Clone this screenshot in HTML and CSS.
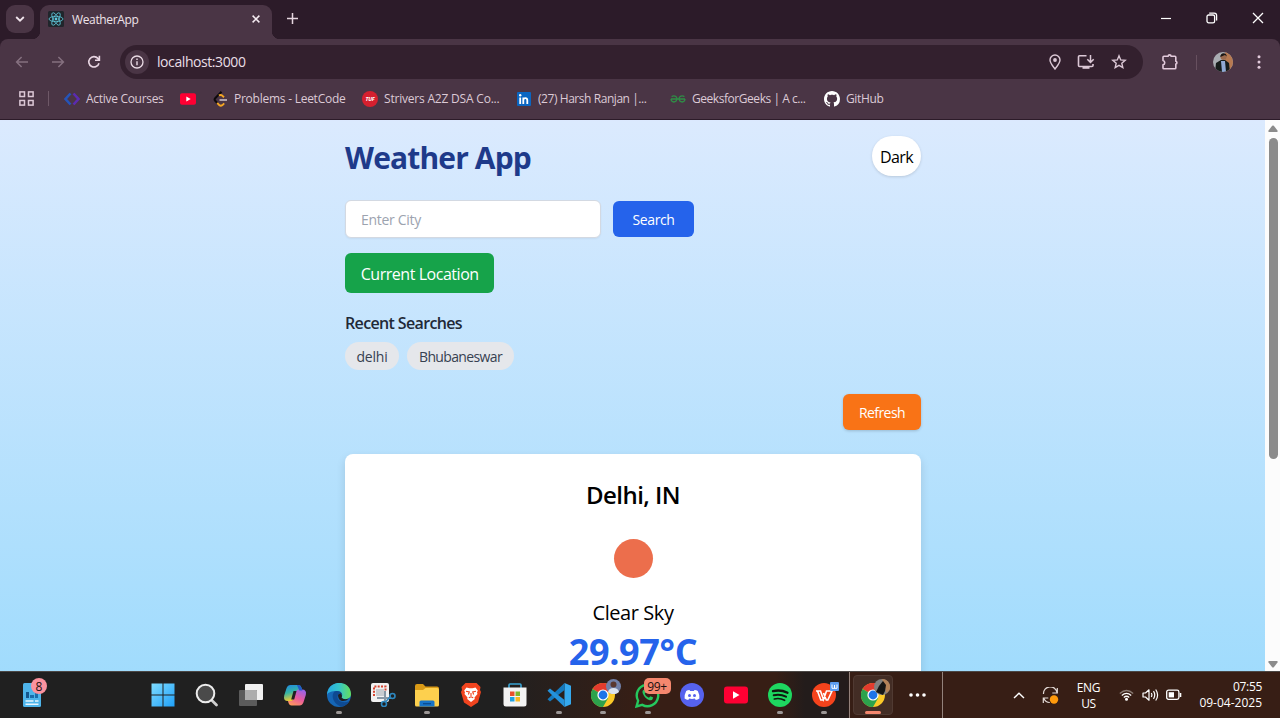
FILE: index.html
```html
<!DOCTYPE html>
<html lang="en">
<head>
<meta charset="utf-8">
<title>WeatherApp</title>
<link rel="stylesheet" href="styles.css">
</head>
<body>
<div class="screen">
  <div class="tabstrip">
    <div class="tab-search"><svg width="10" height="6" viewBox="0 0 10 6"><path d="M1.2 1 5 4.7 8.8 1" fill="none" stroke="#f0e4ec" stroke-width="1.8"/></svg></div>
    <div class="tab">
      <svg class="tab-icon" width="16" height="16" viewBox="0 0 16 16"><rect width="16" height="16" rx="1.5" fill="#20252b"/><g fill="none" stroke="#5fc9dc" stroke-width=".8"><ellipse cx="8" cy="8" rx="7" ry="2.7"/><ellipse cx="8" cy="8" rx="7" ry="2.7" transform="rotate(60 8 8)"/><ellipse cx="8" cy="8" rx="7" ry="2.7" transform="rotate(120 8 8)"/></g><circle cx="8" cy="8" r="1.4" fill="#5fc9dc"/></svg>
      <span class="tab-title">WeatherApp</span>
      <svg class="tab-close" width="8" height="8" viewBox="0 0 8 8"><path d="M.6.6l6.8 6.8M7.4.6.6 7.4" stroke="#f6ecf2" stroke-width="1.5"/></svg>
    </div>
    <svg class="new-tab" width="11" height="11" viewBox="0 0 11 11"><path d="M5.5 0v11M0 5.5h11" stroke="#e6d6e0" stroke-width="1.5"/></svg>
    <div class="win-controls">
      <svg width="10" height="12" viewBox="0 0 10 12"><path d="M0 6.500h10" stroke="#fff" stroke-width="1.2"/></svg>
      <svg width="12" height="12" viewBox="0 0 12 12"><rect x="1" y="3" width="7.6" height="7.8" rx="1.6" fill="none" stroke="#fff" stroke-width="1.3"/><path d="M3.2 1.2h5a2.4 2.4 0 0 1 2.4 2.4v5" fill="none" stroke="#fff" stroke-width="1.3"/></svg>
      <svg width="12" height="12" viewBox="0 0 12 12"><path d="M1 1l10 10M11 1 1 11" stroke="#fff" stroke-width="1.3"/></svg>
    </div>
  </div>

  <div class="toolbar">
    <div class="nav">
      <svg width="14" height="12" viewBox="0 0 14 12"><path d="M13 6H1.8M6.6 1 1.6 6l5 5" fill="none" stroke="#85707f" stroke-width="1.5"/></svg>
      <svg width="14" height="12" viewBox="0 0 14 12"><path d="M1 6h11.2M7.4 1l5 5-5 5" fill="none" stroke="#85707f" stroke-width="1.5"/></svg>
      <svg width="14" height="14" viewBox="0 0 14 14"><path d="M12 8.2A5.2 5.2 0 1 1 10.900 3.400L12.400 5M12.400.8V5.200H8" fill="none" stroke="#e9d6e3" stroke-width="1.6"/></svg>
    </div>
    <div class="omnibox">
      <div class="site-info"><svg width="14" height="14" viewBox="0 0 14 14"><circle cx="7" cy="7" r="6" fill="none" stroke="#eadbe5" stroke-width="1.3"/><path d="M7 6.2v4M7 3.6v1.5" stroke="#eadbe5" stroke-width="1.4"/></svg></div>
      <span class="url">localhost:3000</span>
      <div class="omni-icons">
        <svg width="12" height="16" viewBox="0 0 12 16"><path d="M6 1a5 5 0 0 1 5 5c0 3-2.600 5.800-5 9C3.600 11.800 1 9 1 6a5 5 0 0 1 5-5z" fill="none" stroke="#dcc8d6" stroke-width="1.4"/><circle cx="6" cy="6" r="1.9" fill="#dcc8d6"/></svg>
        <svg width="18" height="16" viewBox="0 0 18 16"><path d="M9.500 1.800H2.500Q1.500 1.800 1.500 2.800v8.700q0 1 1 1h12.500q1 0 1-1V10" fill="none" stroke="#dcc8d6" stroke-width="1.6"/><path d="M5.500 12.500h7v2.300h-7z" fill="#dcc8d6"/><path d="M13.500 1v7M10.300 5.200l3.200 3.200 3.200-3.200" fill="none" stroke="#dcc8d6" stroke-width="1.500"/></svg>
        <svg width="16" height="16" viewBox="0 0 16 16"><path d="M8 1.800l1.700 4.100 4.500.4-3.400 2.900 1 4.400L8 11.300l-3.800 2.300 1-4.400L1.800 6.300l4.500-.4z" fill="none" stroke="#dcc8d6" stroke-width="1.4"/></svg>
      </div>
    </div>
    <div class="tool-icons">
      <svg class="ext" width="18" height="18" viewBox="0 0 18 18"><path d="M2 4.200q0-.9.900-.9h4.300a1.400 1.400 0 0 1 2.800 0h3.900q.9 0 .9.900v4a1.500 1.500 0 0 1 0 2.900v3.800q0 .9-.9.900H2.900q-.9 0-.9-.9v-3.100a2.200 2.200 0 0 0 0-4.300z" fill="none" stroke="#e3cbdc" stroke-width="1.600" stroke-linejoin="round"/></svg>
      <span class="tool-sep"></span>
      <svg class="avatar" width="20" height="20" viewBox="0 0 20 20"><defs><clipPath id="av"><circle cx="10" cy="10" r="10"/></clipPath></defs><g clip-path="url(#av)"><rect width="20" height="20" fill="#a9adb2"/><rect x="12" width="8" height="20" fill="#b77a51"/><path d="M2 20l1-9 5-3h4l4 3 1 9z" fill="#161d1b"/><path d="M8 9h4l1 11H9z" fill="#91aad4"/><circle cx="10.500" cy="5" r="3" fill="#9b6a4e"/><path d="M7.300 5c-.3-5 6.500-5 6.400-.5L12 3z" fill="#1c1715"/></g></svg>
      <svg class="menu" width="4" height="14" viewBox="0 0 4 14"><g fill="#e3cbdc"><circle cx="2" cy="1.800" r="1.500"/><circle cx="2" cy="7" r="1.500"/><circle cx="2" cy="12.200" r="1.500"/></g></svg>
    </div>
  </div>

  <div class="bookmarks">
    <svg class="apps" width="15" height="15" viewBox="0 0 15 15"><g fill="none" stroke="#dcc8d6" stroke-width="1.500"><rect x=".9" y=".9" width="4.600" height="4.600"/><rect x="9.500" y=".9" width="4.600" height="4.600"/><rect x=".9" y="9.500" width="4.600" height="4.600"/><rect x="9.500" y="9.500" width="4.600" height="4.600"/></g></svg>
    <span class="bm-sep"></span>
    <div class="bm bm-active"><svg width="16" height="14" viewBox="0 0 16 14"><path d="M6.500 1.500 1.500 7l5 5.500" fill="none" stroke="#2554b8" stroke-width="2.600"/><path d="M9.500 1.500l5 5.500-5 5.500" fill="none" stroke="#5b2bb0" stroke-width="2.600"/></svg><span>Active Courses</span></div>
    <div class="bm bm-yt"><svg width="16" height="12" viewBox="0 0 16 12"><rect width="16" height="11.500" rx="2" y=".2" fill="#ff0033"/><path d="M6.300 3.500v5L10.700 6z" fill="#fff"/></svg></div>
    <div class="bm bm-leet"><svg width="16" height="16" viewBox="0 0 16 16"><path d="M8.500.8 2.200 7.200q-1.200 1.300 0 2.600L4.500 12.300" fill="none" stroke="#0d0a0c" stroke-width="2"/><path d="M4.200 11.800l2 2.300q1.600 1.300 3.300 0l1.700-1.700M6 4.600q1.600-1.300 3.200 0l1.800 1.700" fill="none" stroke="#f5a623" stroke-width="1.900"/><path d="M6.500 9H14" stroke="#c9bfc6" stroke-width="1.600"/></svg><span>Problems - LeetCode</span></div>
    <div class="bm bm-tuf"><svg width="16" height="16" viewBox="0 0 16 16"><circle cx="8" cy="8" r="8" fill="#d5202f"/><text x="8" y="10.100" class="tuf-text" text-anchor="middle">TUF</text></svg><span>Strivers A2Z DSA Co...</span></div>
    <div class="bm bm-in"><svg width="14" height="14" viewBox="0 0 14 14"><rect width="14" height="14" rx="1" fill="#0a66c2"/><path d="M3.200 5.500V12M6.300 12V5.500M6.300 8.200q0-2 2-2t2 2V12" fill="none" stroke="#fff" stroke-width="1.800"/><circle cx="3.200" cy="3.200" r="1.200" fill="#fff"/></svg><span>(27) Harsh Ranjan |...</span></div>
    <div class="bm bm-gfg"><svg width="16" height="8" viewBox="0 0 16 8"><path d="M1 4h14M1.600 1.600Q4 .2 6 1.600 7.200 2.800 6.900 4 6.500 7 3.800 7 1.200 6.800 1 4M14.400 1.600Q12 .2 10 1.600 8.800 2.800 9.100 4 9.500 7 12.200 7 14.800 6.800 15 4" fill="none" stroke="#2f8d46" stroke-width="1.300"/></svg><span>GeeksforGeeks | A c...</span></div>
    <div class="bm bm-git"><svg width="16" height="16" viewBox="0 0 16 16"><path fill="#fff" d="M8 0C3.580 0 0 3.580 0 8c0 3.540 2.290 6.530 5.470 7.590.4.070.55-.17.55-.38 0-.19-.01-.82-.01-1.490-2.010.37-2.530-.49-2.690-.94-.09-.23-.48-.94-.82-1.130-.28-.15-.68-.52-.01-.53.63-.01 1.080.58 1.230.82.72 1.210 1.870.87 2.330.66.070-.52.280-.87.51-1.070-1.780-.2-3.640-.89-3.640-3.950 0-.87.31-1.590.82-2.150-.08-.2-.36-1.020.08-2.120 0 0 .67-.21 2.200.82.64-.18 1.320-.27 2-.27s1.360.09 2 .27c1.530-1.040 2.200-.82 2.200-.82.44 1.100.16 1.920.08 2.120.51.56.82 1.270.82 2.150 0 3.070-1.870 3.750-3.650 3.950.29.25.54.73.54 1.480 0 1.070-.01 1.930-.01 2.200 0 .21.15.46.55.38A8.010 8.010 0 0 0 16 8c0-4.420-3.580-8-8-8z"/></svg><span>GitHub</span></div>
  </div>

  <div class="viewport">
    <main class="page">
      <div class="container">
        <header class="header"><h1>Weather App</h1><button class="dark">Dark</button></header>
        <div class="search-row"><div class="city-input">Enter City</div><button class="search">Search</button></div>
        <button class="locate">Current Location</button>
        <h2 class="recent-title">Recent Searches</h2>
        <div class="chips"><span class="chip chip-delhi">delhi</span><span class="chip chip-bhu">Bhubaneswar</span></div>
        <div class="refresh-row"><button class="refresh">Refresh</button></div>
        <section class="card">
          <h2 class="city">Delhi, IN</h2>
          <div class="sun"></div>
          <p class="sky">Clear Sky</p>
          <p class="temp">29.97°C</p>
        </section>
      </div>
    </main>
    <div class="scrollbar">
      <svg width="10" height="7" viewBox="0 0 10 7"><path d="M4.200.8Q5 0 5.800.8L9.500 5.500Q10 7 9 7H1Q0 7 .5 5.500z" fill="#8b8b8b"/></svg>
      <div class="thumb"></div>
      <svg width="10" height="7" viewBox="0 0 10 7"><path d="M4.200 6.200Q5 7 5.800 6.200L9.500 1.500Q10 0 9 0H1Q0 0 .5 1.500z" fill="#8b8b8b"/></svg>
    </div>
  </div>

  <div class="taskbar">
    <div class="widgets">
      <svg width="18" height="24" viewBox="0 0 18 24"><rect width="18" height="24" rx="1.500" fill="#4eb4ea"/><path d="M3 9h3v6H3z" fill="#14568c"/><path d="M7 12h4v3H7zM12 7h3v8h-3z" fill="#1b6dab"/><path d="M2.500 18h8M12 18h3.500M2.500 21.200h13" stroke="#e8f6ff" stroke-width="1.500"/></svg>
      <span class="badge badge-pink">8</span>
    </div>
    <div class="apps-row">
      <div class="app"><svg width="24" height="24" viewBox="0 0 24 24"><defs><linearGradient id="w" x1="0" y1="0" x2="1" y2="1"><stop stop-color="#7fdcff"/><stop offset="1" stop-color="#1fa0f8"/></linearGradient></defs><path d="M.5.500h11v11H.5zM12.500.500h11v11h-11zM.5 12.500h11v11H.5zM12.500 12.500h11v11h-11z" fill="url(#w)"/></svg></div>
      <div class="app"><svg width="24" height="24" viewBox="0 0 24 24"><path d="M17 17.500l4.500 4.500" stroke="#cfcfcf" stroke-width="2.800" stroke-linecap="round"/><circle cx="10.500" cy="10.500" r="8.800" fill="#4a4a4a" stroke="#ececec" stroke-width="2"/></svg></div>
      <div class="app"><svg width="26" height="24" viewBox="0 0 26 24"><rect x="7" y="1" width="18" height="16" rx="1" fill="#f1f1f1"/><rect x="1" y="7" width="18" height="16" rx="1" fill="#5b5b5b"/><path d="M7 7h11q1 0 1 1v9H7z" fill="#adadad"/></svg></div>
      <div class="app"><svg width="24" height="24" viewBox="0 0 24 24"><defs><linearGradient id="ca" x1="0" y1="0" x2=".3" y2="1"><stop stop-color="#1f86e8"/><stop offset=".5" stop-color="#35b5a4"/><stop offset="1" stop-color="#f3cb2f"/></linearGradient><linearGradient id="cb" x1=".7" y1="0" x2=".2" y2="1"><stop stop-color="#9a63e8"/><stop offset=".5" stop-color="#e85a9e"/><stop offset="1" stop-color="#ff9a5a"/></linearGradient></defs><path d="M7.500 2h8q2.300 0 3.100 3l.7 2.500h-3.500q-2 0-2.700 2.300L11 16.500Q10.200 18 8.500 18H5Q0 18 1.200 12.500L3.600 5Q4.700 2 7.500 2z" fill="url(#ca)"/><path d="M16.500 22.500h-8q-2.300 0-3.100-3L5 18h3q2 0 2.700-2.300L13 8.500Q13.800 6.500 15.500 6.500H19q5 0 3.800 5.500l-2.400 7.500q-1.100 3-3.900 3z" fill="url(#cb)"/><path d="M10.500 8h3l-2.300 8.500h-3z" fill="#202020"/><path d="M14 2h1.500q2.300 0 3.100 3l.7 2.500h-3z" fill="#2159c9"/></svg></div>
      <div class="app on"><svg width="24" height="24" viewBox="0 0 24 24"><defs><linearGradient id="ea" x1="0" x2="1"><stop stop-color="#27a9e4"/><stop offset=".5" stop-color="#35c5c9"/><stop offset="1" stop-color="#66e05a"/></linearGradient></defs><circle cx="12" cy="12" r="12" fill="#1566b5"/><path d="M0 12C.5-4 23.500-4 24 11c0 6-8.500 6.500-9.500 3.500 1.500-2 .5-6.500-5-6.500C5 8 1 9 0 12z" fill="url(#ea)"/><path d="M9.500 8C3 9 5 21 14.500 23.700 18 23 21 21 22.500 18c-5 2.500-12 1-12-4q0-2.500 1.800-3.500 2.200-.5 3 1.500Q15 8 9.500 8z" fill="#0e4a92"/><path d="M11 12q1-2 3-1.500 1.500 2 .5 4 2 3 7.500 1-3 3-7 2.500-4-1-4-6z" fill="#202020"/></svg></div>
      <div class="app"><svg width="26" height="24" viewBox="0 0 26 24"><rect x="1" y="0" width="18" height="19" rx="2" fill="#f1f1f1"/><path d="M4 13V3.500h11.500V8" fill="none" stroke="#d64531" stroke-width="2" stroke-dasharray="2 1.300"/><path d="M6 6h8v7H6z" fill="#c8ccd0"/><path d="M7 15h14M15 8v11" stroke="#8797a5" stroke-width="2"/><g fill="none" stroke="#2d87bf" stroke-width="1.600"><circle cx="22.500" cy="13" r="2.500"/><circle cx="14" cy="21" r="2.500"/><path d="M20 14l-4.500 5"/></g></svg></div>
      <div class="app on"><svg width="26" height="24" viewBox="0 0 26 24"><path d="M1 3q0-2 2-2h6l2.500 2.500H23q2 0 2 2V20H1z" fill="#d99a16"/><path d="M1 7h8l2.500-2H23q2 0 2 2v15q0 1.500-1.500 1.500h-21Q1 23.500 1 22z" fill="#fdd04e"/><path d="M5.500 23.500V19q0-1.500 1.500-1.500h12q1.500 0 1.500 1.500v4.500z" fill="#1774c7"/><path d="M9 20.700h8" stroke="#0a4a8d" stroke-width="1.300"/></svg></div>
      <div class="app"><svg width="22" height="24" viewBox="0 0 22 24"><path d="M5.500 0h11L19 2.500l1.500 1.500-.5 3 1 2-3 10.500-7 4.500-7-4.500L1 9l1-2-.5-3L3 2.500z" fill="#f0441f"/><path d="M6.500 4.500l3 .7h3l3-.7 2.300 3-.8 2 .5 1.500-3 3.500.3 1.500-3.800 3-3.800-3 .3-1.500-3-3.500.5-1.500-.8-2z" fill="#fff"/><path d="M6 8.200l3.300.8-.9 2.500M16 8.200l-3.300.8.9 2.500M8.800 14.800l2.200-1 2.200 1M11 10v3" fill="none" stroke="#f0441f" stroke-width="1.100"/></svg></div>
      <div class="app"><svg width="24" height="24" viewBox="0 0 24 24"><path d="M6 5V2q0-1 1-1h10q1 0 1 1v3" fill="none" stroke="#3aa4d4" stroke-width="1.600"/><path d="M.5 4.500h23V21q0 2.500-2.500 2.500H3Q.5 23.500.5 21z" fill="#f3f3f3"/><path d="M7 8.500h4.500V13H7z" fill="#e8502b"/><path d="M12.500 8.500H17V13h-4.500z" fill="#7eb62c"/><path d="M7 14h4.500v4.500H7z" fill="#1ea2e2"/><path d="M12.500 14H17v4.500h-4.500z" fill="#f9b81f"/></svg></div>
      <div class="app on"><svg width="24" height="24" viewBox="0 0 24 24"><path d="M17.500 0L24 2.700v18.600L17.500 24z" fill="#35a9ee"/><path d="M17.500 0v7L3 18.500.5 16.300z" fill="#1479bd"/><path d="M17.500 24v-7L3 5.500.5 7.700z" fill="#2492db"/></svg></div>
      <div class="app on"><svg class="chrome" width="24" height="24" viewBox="0 0 24 24"><g id="chr"><circle cx="12" cy="12" r="12" fill="#fbc928"/><path d="M12 12L1.600 6A12 12 0 0 1 22.400 6z" fill="#e33b2e"/><path d="M12 12L1.600 6A12 12 0 0 0 12 24l5.200-9z" fill="#2ca24c"/><circle cx="12" cy="12" r="5.600" fill="#fff"/><circle cx="12" cy="12" r="4.400" fill="#1f74e8"/></g></svg><svg class="mini" width="15" height="15" viewBox="0 0 15 15"><circle cx="7.500" cy="7.500" r="7.500" fill="#7180a8"/><path d="M2 13q1-4 5.500-4t5.500 4q-5.500 4.500-11 0z" fill="#dbe2ee"/><circle cx="7.500" cy="5.500" r="3" fill="#5a3830"/></svg></div>
      <div class="app on"><svg width="25" height="25" viewBox="0 0 24 24"><path d="M1.500 22.500L3 17A10.300 10.300 0 1 1 7 21z" fill="none" stroke="#25c85e" stroke-width="2.300"/><path d="M8.500 6.500q-2 1-1 3.500 2 5 6.500 6.500 3 .5 3.500-2.500l-2.700-1.300-1.500 1.500q-3-1-4-4l1-1.200z" fill="#25c85e"/></svg><span class="badge badge-wa">99+</span></div>
      <div class="app"><svg width="24" height="24" viewBox="0 0 24 24"><circle cx="12" cy="12" r="12" fill="#5662ee"/><path d="M9.500 7Q7.500 7.200 6.200 8 4.300 11.500 4.600 15.500q1.700 1.400 3.600 1.600l1-1.500q2.800.7 5.600 0l1 1.500q1.900-.2 3.600-1.600.3-4-1.600-7.500-1.300-.8-3.300-1l-.6 1h-3.800z" fill="#fff"/><circle cx="9.500" cy="12.500" r="1.500" fill="#5662ee"/><circle cx="14.500" cy="12.500" r="1.500" fill="#5662ee"/></svg></div>
      <div class="app"><svg width="24" height="18" viewBox="0 0 24 18"><rect y=".5" width="24" height="17" rx="3" fill="#ff0033"/><path d="M9 5.300v7.400L15.500 9z" fill="#fff"/></svg></div>
      <div class="app on"><svg width="24" height="24" viewBox="0 0 24 24"><circle cx="12" cy="12" r="12" fill="#1ed760"/><g fill="none" stroke="#10170f" stroke-linecap="round"><path d="M5 8.200q7.500-2 14.500 1.600" stroke-width="2.300"/><path d="M5.700 12.200q6.500-1.600 12.300 1.500" stroke-width="2"/><path d="M6.300 16q5.500-1.300 10.300 1.300" stroke-width="1.600"/></g></svg></div>
      <div class="app on"><svg width="24" height="24" viewBox="0 0 24 24"><circle cx="12" cy="12" r="12" fill="#f4431c"/><path d="M4 8h4.500l3 8.500L14.500 8H20l-4.200 9h-1.500l-2.800-7M5.500 8l3.300 9h2.500" fill="none" stroke="#fff" stroke-width="1.600"/></svg><svg class="mini wps" width="9" height="9" viewBox="0 0 9 9"><rect width="9" height="9" rx="1" fill="#5b9cf0"/><path d="M2 2.500v3.800h5V2.500M4.500 3v3" fill="none" stroke="#fff"/></svg></div>
    </div>
    <div class="group"><div class="app active"><svg width="24" height="24" viewBox="0 0 24 24"><use href="#chr"/></svg><svg class="mini" width="16" height="16" viewBox="0 0 16 16"><circle cx="8" cy="8" r="8" fill="#80807f"/><path d="M8 0a8 8 0 0 1 7 12l-3 2-1-6z" fill="#b48258"/><path d="M2 13l3-6 4-5 3 4-1 6-2 4z" fill="#171615"/></svg></div>
      <svg class="more" width="17" height="4" viewBox="0 0 17 4"><g fill="#fff"><circle cx="2" cy="2" r="1.800"/><circle cx="8.500" cy="2" r="1.800"/><circle cx="15" cy="2" r="1.800"/></g></svg></div>
    <div class="tray">
      <svg class="chev" width="12" height="7" viewBox="0 0 12 7"><path d="M1 6l5-4.800L11 6" fill="none" stroke="#fff" stroke-width="1.400"/></svg>
      <svg class="sync" width="17" height="17" viewBox="0 0 17 17"><path d="M1.500 7A6.800 6.800 0 0 1 15 5.500M15.300 1v5h-5M1.300 16v-5h5M1.800 11.500a6.800 6.800 0 0 0 6 4" fill="none" stroke="#e5dcd8" stroke-width="1.200"/><circle cx="12" cy="12.500" r="4.200" fill="#ff9a0c"/></svg>
      <div class="lang"><span>ENG</span><span>US</span></div>
      <svg class="wifi" width="15" height="12" viewBox="0 0 15 12"><g fill="none" stroke="#fff" stroke-width="1.200"><path d="M.8 4.500q6.700-6 13.400 0" stroke="#8a7b74"/><path d="M2.800 6.500q4.700-4.200 9.400 0M4.800 8.500q2.700-2.500 5.400 0"/></g><circle cx="7.500" cy="10.300" r="1.500" fill="#fff"/></svg>
      <svg class="vol" width="17" height="14" viewBox="0 0 17 14"><path d="M1 5h2.500L7 1.800v10.400L3.500 9H1z" fill="none" stroke="#fff" stroke-width="1.200" stroke-linejoin="round"/><path d="M9.300 5q1.200 2 0 4M11.500 3.200q2.500 3.800 0 7.600M13.700 1.500q3.800 5.500 0 11" fill="none" stroke="#fff" stroke-width="1.200"/></svg>
      <svg class="bat" width="16" height="12" viewBox="0 0 16 12"><rect x=".7" y="1.200" width="12.200" height="9.200" rx="1.800" fill="none" stroke="#fff" stroke-width="1.300"/><rect x="2.700" y="3.200" width="5.300" height="5.200" fill="#fff"/><path d="M14.500 4v4" stroke="#fff" stroke-width="1.600"/></svg>
      <div class="clock"><span>07:55</span><span class="date">09-04-2025</span></div>
    </div>
  </div>
</div>
</body>
</html>
```

FILE: styles.css
```css
* { box-sizing: border-box; }
body { margin: 0; font-family: "Open Sans", "Noto Sans", sans-serif; }
svg { display: block; flex: none; }
h1, h2, p { margin: 0; }
button { border: 0; margin: 0; padding: 0; font: inherit; display: flex; align-items: center; justify-content: center; white-space: nowrap; }
.screen { width: 1280px; height: 718px; display: flex; flex-direction: column; overflow: hidden; background: #2c1b29; }

/* Tab strip */
.tabstrip { height: 39px; flex: none; display: flex; align-items: flex-start; padding: 5px 0 0 6px; background: #2c1b29; }
.tab-search { width: 28px; height: 28px; border-radius: 9px; background: #4a3545; display: flex; align-items: center; justify-content: center; }
.tab { position: relative; width: 232px; height: 34px; margin-left: 6px; padding: 0 12px 6px 8px; display: flex; align-items: center; border-radius: 9px 9px 0 0; background: #4a3545; color: #efe3ea; font-size: 12px; }
.tab::before, .tab::after { content: ""; position: absolute; bottom: 0; width: 8px; height: 8px; }
.tab::before { left: -8px; background: radial-gradient(circle at 0 0, #2c1b29 8px, #4a3545 8.5px); }
.tab::after { right: -8px; background: radial-gradient(circle at 100% 0, #2c1b29 8px, #4a3545 8.5px); }
.tab-title { margin-left: 8px; white-space: nowrap; letter-spacing: -.35px; }
.tab-close { margin-left: auto; }
.new-tab { margin: 8px 0 0 15px; }
.win-controls { margin: 7px 16px 0 auto; display: flex; gap: 34.5px; }

/* Toolbar */
.toolbar { height: 46px; flex: none; display: flex; align-items: center; padding-left: 15px; background: #4a3545; border-radius: 8px 8px 0 0; }
.nav { display: flex; align-items: center; gap: 22px; width: 105px; }
.omnibox { width: 1023px; height: 34px; border-radius: 17px; background: #33202e; display: flex; align-items: center; padding: 0 16px 0 5px; }
.site-info { width: 24px; height: 24px; border-radius: 50%; background: #4a3545; display: flex; align-items: center; justify-content: center; }
.url { margin: -2px 0 0 8px; font-size: 14px; color: #e9dfe6; letter-spacing: -.42px; }
.omni-icons { margin-left: auto; display: flex; align-items: center; gap: 16px; }
.tool-icons { display: flex; align-items: center; flex: 1; padding-left: 18px; }
.tool-sep { width: 1px; height: 15px; background: #67505f; margin-left: 17px; }
.avatar { margin-left: 16px; }
.menu { margin-left: 24px; }

/* Bookmarks */
.bookmarks { height: 35px; flex: none; display: flex; align-items: center; padding: 0 0 7px 19px; background: #4a3545; border-bottom: 1px solid #2c1b29; color: #dccad6; font-size: 12px; white-space: nowrap; }
.bm-sep { width: 1px; height: 15px; margin-left: 14px; background: #6e5867; }
.bm { display: flex; align-items: center; gap: 6px; }
.bm-active { margin-left: 15px; width: 116px; letter-spacing: -.3px; }
.bm-yt { width: 33px; }
.bm-leet { width: 149px; gap: 5px; letter-spacing: -.25px; }
.bm-tuf { width: 155px; letter-spacing: -.2px; }
.bm-in { width: 153px; gap: 7px; letter-spacing: -.44px; }
.bm-gfg { width: 154px; letter-spacing: -.45px; }
.bm-git { letter-spacing: -.35px; }
.tuf-text { font: italic bold 5.5px "Open Sans", sans-serif; fill: #fff; }

/* Page */
.viewport { height: 551px; flex: none; display: flex; overflow: hidden; }
.page { flex: 1; padding-top: 16px; background: linear-gradient(#dbe8fe 0, #dbeafe 2px, #7dd3fc 887px); }
.container { width: 576px; margin-left: 345px; display: flex; flex-direction: column; align-items: flex-start; }
.header { width: 100%; height: 40px; display: flex; justify-content: space-between; align-items: center; }
h1 { font-size: 30px; line-height: 36px; font-weight: 700; color: #1e3a8a; margin-top: 4px; white-space: nowrap; letter-spacing: -.86px; }
.dark { width: 49px; height: 40px; border-radius: 20px; background: #fff; color: #000; font-size: 16px; padding-top: 2px; box-shadow: 0 1px 3px rgba(0, 0, 0, .14); letter-spacing: -.61px; }
.search-row { display: flex; align-items: center; gap: 12px; margin-top: 24px; }
.city-input { width: 256px; height: 38px; border: 1px solid #d3d9e2; border-radius: 6px; background: #fff; color: #9ca3af; font-size: 14px; line-height: 20px; padding: 9px 15px; box-shadow: 0 1px 2px rgba(0, 0, 0, .05); white-space: nowrap; letter-spacing: -.29px; }
.search { width: 81px; height: 36px; border-radius: 6px; background: #2563eb; color: #fff; font-size: 14px; padding-top: 1px; letter-spacing: -.39px; }
.locate { width: 149.4px; height: 40px; margin-top: 15.4px; border-radius: 6px; background: #16a34a; color: #fff; font-size: 16px; padding-top: 2px; letter-spacing: -.46px; }
.recent-title { margin-top: 17.6px; font-size: 16px; line-height: 24px; font-weight: 600; color: #1f2937; white-space: nowrap; letter-spacing: -.64px; }
.chips { display: flex; gap: 8px; margin-top: 7px; }
.chip { height: 28px; border-radius: 14px; background: #e5e7eb; color: #374151; font-size: 14px; line-height: 29px; text-align: center; white-space: nowrap; }
.chip-delhi { width: 54px; letter-spacing: -.22px; }
.chip-bhu { width: 107px; letter-spacing: -.64px; }
.refresh-row { width: 100%; display: flex; justify-content: flex-end; margin-top: 24px; }
.refresh { width: 78px; height: 36px; border-radius: 6px; background: #f97316; color: #fff; font-size: 14px; padding-top: 1px; box-shadow: 0 1px 3px rgba(0, 0, 0, .18); letter-spacing: -.58px; }
.card { width: 100%; height: 400px; flex: none; margin-top: 24px; padding-top: 25px; border-radius: 8px; background: #fff; box-shadow: 0 4px 10px rgba(0, 0, 0, .12); display: flex; flex-direction: column; align-items: center; white-space: nowrap; color: #000; }
.city { font-size: 24px; line-height: 32px; font-weight: 600; letter-spacing: -.55px; }
.sun { width: 39px; height: 39px; margin-top: 28px; border-radius: 50%; background: #ec6e4c; }
.sky { margin-top: 21px; font-size: 20px; line-height: 28px; letter-spacing: -.43px; }
.temp { margin-top: 7px; font-size: 36px; line-height: 36px; font-weight: 700; color: #2563eb; letter-spacing: -.35px; }
.scrollbar { width: 15px; padding: 5px 0 3px 1px; background: #fcfcfc; display: flex; flex-direction: column; align-items: center; }
.thumb { width: 9px; height: 321px; margin: 6px 0 auto; border-radius: 5px; background: #8b8b8b; }

/* Taskbar */
.taskbar { height: 47px; flex: none; display: flex; border-top: 1px solid #4b4745; background: linear-gradient(90deg, #202020 500px, #371e15 640px, #371e15 775px, #231c1b 805px, #231c1b 848px, #371e15 850px); }
.widgets { position: relative; width: 140.5px; padding: 11px 0 0 23px; }
.badge { position: absolute; display: flex; align-items: center; justify-content: center; color: #1b1010; }
.badge-pink { left: 31px; top: 6px; width: 16px; height: 16px; border-radius: 50%; background: #fb929e; font-size: 12px; }
.apps-row { display: flex; }
.app { position: relative; width: 44.1px; height: 46px; display: flex; align-items: center; justify-content: center; }
.on::after { content: ""; position: absolute; left: 19px; top: 39px; width: 6px; height: 3px; border-radius: 2px; background: #9c9796; }
.mini { position: absolute; left: 25px; top: 7px; }
.wps { left: 28px; top: 10px; }
.badge-wa { left: 18px; top: 6px; width: 27px; height: 16px; border-radius: 5px; background: #f5876e; font-size: 12px; letter-spacing: -.3px; }
.group { display: flex; align-items: center; width: 94px; margin-left: 2.5px; border-left: 1px solid #93827b; border-right: 1px solid #93827b; }
.active { width: 40px; height: 40px; margin-left: 3px; border-radius: 4px; background: #432d25; border: 1px solid #503a32; }
.active::after { content: ""; position: absolute; left: 11px; top: 35px; width: 16px; height: 3px; border-radius: 2px; background: #f5876e; }
.active .mini { left: 20px; top: 3px; }
.more { margin-left: 16px; }
.tray { flex: 1; display: flex; align-items: center; padding-left: 70px; color: #fff; font-size: 12px; line-height: 16px; white-space: nowrap; letter-spacing: -.31px; }
.sync { margin-left: 17px; }
.lang { width: 60px; padding-top: 1px; display: flex; flex-direction: column; align-items: center; }
.vol { margin-left: 8px; }
.bat { margin-left: 7px; }
.clock { margin-left: auto; padding-right: 18px; display: flex; flex-direction: column; align-items: flex-end; }
.date { letter-spacing: 0; }
```
